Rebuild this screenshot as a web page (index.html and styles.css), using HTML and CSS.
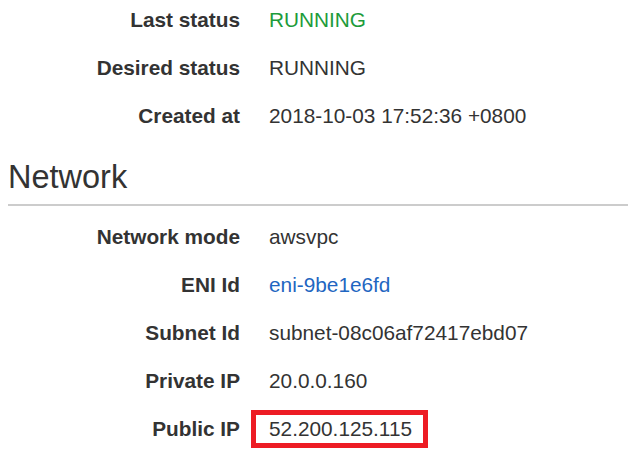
FILE: index.html
```html
<!DOCTYPE html>
<html>
<head>
<meta charset="utf-8">
<link rel="stylesheet" href="styles.css">
</head>
<body>
<div class="page">
  <dl class="details">
    <dt>Last status</dt><dd class="ok">RUNNING</dd>
    <dt>Desired status</dt><dd>RUNNING</dd>
    <dt>Created at</dt><dd>2018-10-03 17:52:36 +0800</dd>
  </dl>
  <h2 class="section-title">Network</h2>
  <dl class="details">
    <dt>Network mode</dt><dd>awsvpc</dd>
    <dt>ENI Id</dt><dd><a class="link" href="#">eni-9be1e6fd</a></dd>
    <dt>Subnet Id</dt><dd>subnet-08c06af72417ebd07</dd>
    <dt>Private IP</dt><dd>20.0.0.160</dd>
    <dt>Public IP</dt><dd><span class="highlight">52.200.125.115</span></dd>
  </dl>
</div>
</body>
</html>
```

FILE: styles.css
```css
html, body {
  margin: 0;
  padding: 0;
  background: #fff;
}
body {
  font-family: "Liberation Sans", Arial, sans-serif;
  color: #333;
}
.page {
  padding: 0 0 0 8px;
}
.details {
  display: grid;
  grid-template-columns: 232px 1fr;
  column-gap: 29px;
  row-gap: 8px;
  margin: 0;
  font-size: 20.8px;
  line-height: 40px;
}
.details dt {
  text-align: right;
  font-weight: bold;
}
.details dd {
  margin: 0;
  display: flex;
  align-items: center;
}
.ok {
  color: #1d9b3b;
}
.link {
  color: #1f66c1;
  text-decoration: none;
}
.section-title {
  margin: 23px 0 11px 0;
  padding-bottom: 9px;
  border-bottom: 2px solid #ccc;
  font-size: 32.5px;
  font-weight: normal;
  line-height: 36px;
}
.highlight {
  display: inline-block;
  border: 5px solid #ed1c24;
  padding: 0 11px 0 13px;
  margin-left: -18px;
  line-height: 28px;
}
```
